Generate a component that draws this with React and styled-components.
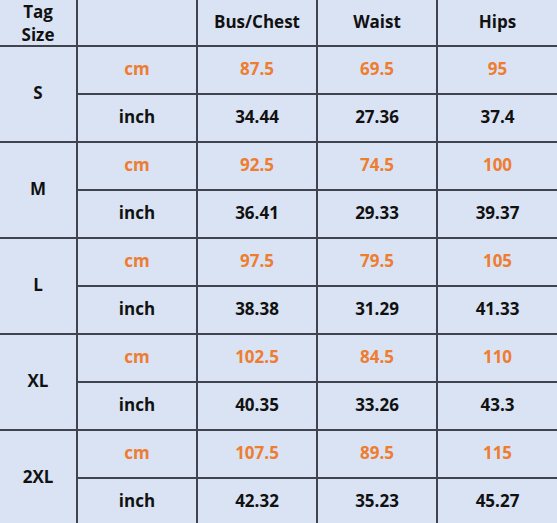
import { Fragment } from 'react';
import styled, { createGlobalStyle } from 'styled-components';

const GlobalStyle = createGlobalStyle`
    html, body {
        margin: 0;
        padding: 0;
        background: #dae3f3;
    }
`;

const Table = styled.div`
    display: grid;
    grid-template-columns: 76px 118px 118px 118px 1fr;
    grid-template-rows: 45px;
    grid-auto-rows: 46px;
    gap: 2px;
    width: 557px;
    background: #41444e;
    font-family: "Open Sans", "Noto Sans", sans-serif;
    font-weight: 700;
    font-size: 17px;
`;

const Cell = styled.div`
    display: flex;
    align-items: center;
    justify-content: center;
    text-align: center;
    padding-bottom: 2px;
    background: #dae3f3;
    color: ${(p) => (p.$orange ? '#ed7d31' : '#111')};
    grid-row: ${(p) => (p.$span ? `span ${p.$span}` : 'auto')};
    line-height: 22px;
`;

const TagCell = styled(Cell)`
    line-height: 23px;
    padding-bottom: 0;
    padding-top: 1px;
`;

const sizes = [
    { tag: 'S', cm: ['87.5', '69.5', '95'], inch: ['34.44', '27.36', '37.4'] },
    { tag: 'M', cm: ['92.5', '74.5', '100'], inch: ['36.41', '29.33', '39.37'] },
    { tag: 'L', cm: ['97.5', '79.5', '105'], inch: ['38.38', '31.29', '41.33'] },
    { tag: 'XL', cm: ['102.5', '84.5', '110'], inch: ['40.35', '33.26', '43.3'] },
    { tag: '2XL', cm: ['107.5', '89.5', '115'], inch: ['42.32', '35.23', '45.27'] },
];

export default function App() {
    return (
        <>
            <GlobalStyle />
            <Table>
                <TagCell>Tag<br />Size</TagCell>
                <Cell />
                <Cell>Bus/Chest</Cell>
                <Cell>Waist</Cell>
                <Cell>Hips</Cell>
                {sizes.map((s) => (
                    <Fragment key={s.tag}>
                        <Cell $span={2}>{s.tag}</Cell>
                        <Cell $orange>cm</Cell>
                        {s.cm.map((v, i) => (
                            <Cell key={'c' + i} $orange>{v}</Cell>
                        ))}
                        <Cell>inch</Cell>
                        {s.inch.map((v, i) => (
                            <Cell key={'i' + i}>{v}</Cell>
                        ))}
                    </Fragment>
                ))}
            </Table>
        </>
    );
}
